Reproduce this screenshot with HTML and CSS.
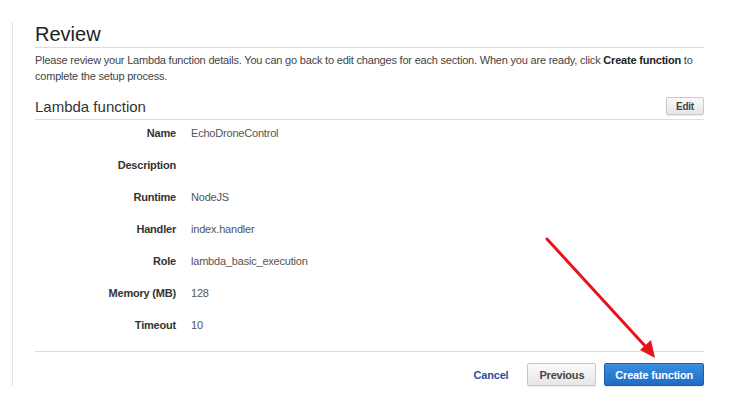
FILE: index.html
```html
<!DOCTYPE html>
<html>
<head>
<meta charset="utf-8">
<link rel="stylesheet" href="styles.css">
</head>
<body>
<div class="page">
  <div class="panel">
    <h1 class="title">Review</h1>
    <p class="intro">Please review your Lambda function details. You can go back to edit changes for each section. When you are ready, click <b>Create function</b> to complete the setup process.</p>
    <div class="section-head">
      <h2 class="section-title">Lambda function</h2>
      <button class="btn btn-small">Edit</button>
    </div>
    <dl class="details">
      <div class="row"><dt>Name</dt><dd>EchoDroneControl</dd></div>
      <div class="row"><dt>Description</dt><dd></dd></div>
      <div class="row"><dt>Runtime</dt><dd>NodeJS</dd></div>
      <div class="row"><dt>Handler</dt><dd>index.handler</dd></div>
      <div class="row"><dt>Role</dt><dd>lambda_basic_execution</dd></div>
      <div class="row"><dt>Memory (MB)</dt><dd>128</dd></div>
      <div class="row"><dt>Timeout</dt><dd>10</dd></div>
    </dl>
    <div class="footer">
      <a class="cancel">Cancel</a>
      <button class="btn">Previous</button>
      <button class="btn btn-primary">Create function</button>
    </div>
  </div>
  <svg class="arrow" width="740" height="403" viewBox="0 0 740 403">
    <line x1="547" y1="239" x2="646" y2="347" stroke="#e8141b" stroke-width="3" stroke-linecap="round"/>
    <polygon points="655,358 640,350 651,340" fill="#e8141b"/>
  </svg>
</div>
</body>
</html>
```
FILE: styles.css
```css
html, body {
  margin: 0;
  padding: 0;
  background: #fff;
}
body {
  font-family: "Liberation Sans", Arial, sans-serif;
  color: #444;
  width: 740px;
  height: 403px;
  overflow: hidden;
}
.page {
  position: relative;
  box-sizing: border-box;
  width: 740px;
  height: 403px;
  padding-top: 22px;
}
.panel {
  margin: 0 0 0 12px;
  border-left: 1px solid #e2e2e2;
  padding: 0 36px 0 22px;
  width: 669px;
}
.title {
  margin: 0;
  font-size: 20px;
  font-weight: normal;
  color: #222;
  line-height: 24px;
  padding-bottom: 1px;
  border-bottom: 1px solid #ddd;
}
.intro {
  margin: 4px 0 0 0;
  font-size: 11px;
  line-height: 16px;
  letter-spacing: -0.2px;
  color: #444;
}
.intro b {
  color: #222;
}
.section-head {
  display: flex;
  justify-content: space-between;
  align-items: center;
  margin-top: 13px;
  padding-bottom: 2px;
  border-bottom: 1px solid #ddd;
}
.section-title {
  margin: 0;
  font-size: 15px;
  font-weight: normal;
  color: #333;
  line-height: 20px;
}
.btn {
  font-family: "Liberation Sans", Arial, sans-serif;
  font-weight: bold;
  font-size: 11px;
  letter-spacing: -0.2px;
  color: #444;
  background: linear-gradient(#fafafa, #e6e6e6);
  border: 1px solid #c8c8c8;
  border-radius: 2px;
  height: 23px;
  padding: 0 11px;
  box-shadow: 0 1px 1px rgba(0,0,0,0.08);
}
.btn-small {
  height: 18px;
  font-size: 10px;
  padding: 0 9px;
  margin-top: -2px;
}
.btn-primary {
  color: #fff;
  background: linear-gradient(#3b8ee0, #1e6cc4);
  border-color: #1a5eaf;
  padding: 0 10px;
}
.details {
  margin: 0;
  padding: 3px 0 16px 0;
  border-bottom: 1px solid #ddd;
  display: flex;
  flex-direction: column;
  gap: 12px;
}
.row {
  display: flex;
  align-items: center;
  height: 20px;
  font-size: 11px;
  letter-spacing: -0.2px;
}
.row dt {
  width: 141px;
  text-align: right;
  font-weight: bold;
  color: #333;
}
.row dd {
  margin: 0 0 0 15px;
  color: #555;
}
.footer {
  display: flex;
  justify-content: flex-end;
  align-items: center;
  gap: 8px;
  margin-top: 11px;
}
.cancel {
  font-size: 11px;
  font-weight: bold;
  letter-spacing: -0.2px;
  color: #2a4f9e;
  margin-right: 11px;
}
.arrow {
  position: absolute;
  left: 0;
  top: 0;
  pointer-events: none;
}
```
